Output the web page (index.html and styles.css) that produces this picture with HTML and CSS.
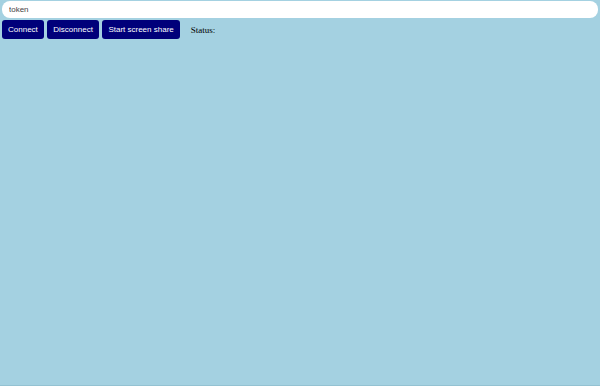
FILE: index.html
```html
<!DOCTYPE html>
<html lang="en">
<head>
  <meta charset="UTF-8">
  <meta name="viewport" content="width=device-width, initial-scale=1.0">
  <title>Screen share</title>
  <link rel="stylesheet" href="styles.css">
</head>
<body>
  <input class="token" type="text" placeholder="token">
  <div class="controls">
    <button>Connect</button>
    <button>Disconnect</button>
    <button>Start screen share</button>
    <span class="status">Status:</span>
  </div>
</body>
</html>
```

FILE: styles.css
```css
* {
  box-sizing: border-box;
}

html, body {
  margin: 0;
  height: 100%;
}

body {
  background-color: #a4d1e1;
  border-bottom: 1px solid #94c2d2;
  padding: 1px 2px 0;
  font-family: "Liberation Serif", serif;
}

.token {
  display: block;
  width: 100%;
  height: 17px;
  border: none;
  border-radius: 8px;
  background: #fff;
  padding: 0 7px;
  font-family: "Liberation Sans", Arial, sans-serif;
  font-size: 8px;
  color: #333;
  outline: none;
}

.token::placeholder {
  color: #444;
}

.controls {
  display: flex;
  align-items: center;
  gap: 3.5px;
  margin-top: 2px;
}

.controls button {
  height: 19px;
  padding: 0 6px;
  border: none;
  border-radius: 3px;
  background-color: #00007a;
  color: white;
  font-family: "Liberation Sans", Arial, sans-serif;
  font-size: 8px;
  cursor: pointer;
}

.status {
  margin-left: 7.5px;
  font-size: 9px;
  color: #000;
}
```
